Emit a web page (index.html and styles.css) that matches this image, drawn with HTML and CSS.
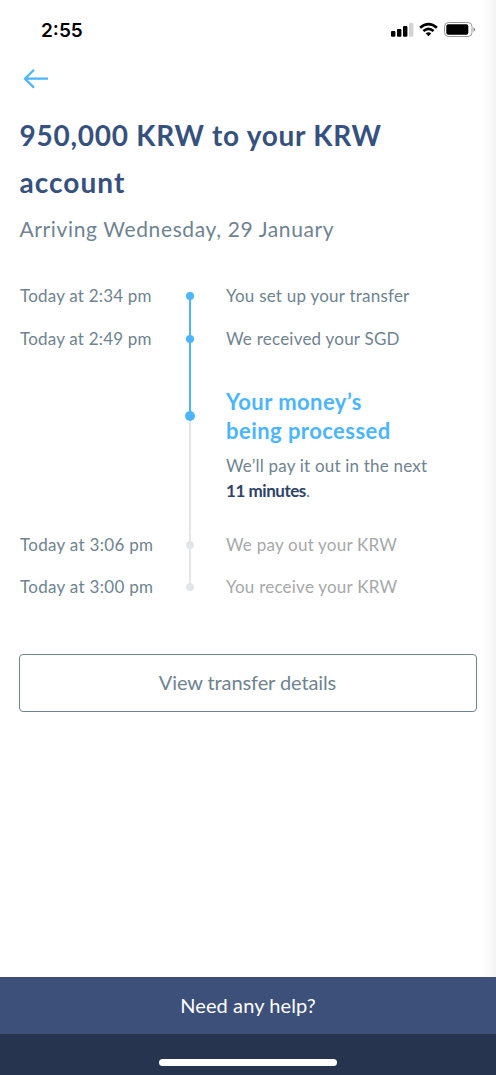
FILE: index.html
```html
<!DOCTYPE html>
<html lang="en">
<head>
<meta charset="utf-8">
<title>Transfer status</title>
<link rel="stylesheet" href="styles.css">
</head>
<body>
<main class="screen">
  <header class="status-bar">
    <span class="clock">2:55</span>
    <svg class="status-icons" width="86" height="20" viewBox="0 0 86 20">
      <rect x="1" y="11" width="4.400" height="5.800" rx="1"/>
      <rect x="7" y="9" width="4.400" height="7.800" rx="1"/>
      <rect x="13" y="6" width="4.400" height="10.800" rx="1"/>
      <rect x="19" y="3" width="4.400" height="13.800" rx="1" fill="#d2d2d2"/>
      <g fill="none" stroke="#000" stroke-width="2.700">
        <path d="M30.100 7.700Q38.500 0.400 46.900 7.700"/>
        <path d="M33.400 11Q38.500 6.700 43.600 11"/>
      </g>
      <path d="M35.700 13.300Q38.500 11.200 41.300 13.300L38.500 16.300Z"/>
      <rect x="54.500" y="2.500" width="27.500" height="14" rx="4" fill="none" stroke="#999"/>
      <rect x="56.300" y="4.300" width="22" height="10.400" rx="2"/>
      <path d="M83.500 7.200Q87 9.500 83.500 11.800Z" fill="#888"/>
    </svg>
  </header>
  <nav class="nav">
    <svg width="26" height="20" viewBox="0 0 26 20" fill="none" stroke="#4db5ff" stroke-width="2.200">
      <path d="M25 9.700H2M11 0.800L2 9.700L11 18.600"/>
    </svg>
  </nav>
  <h1 class="title">950,000 KRW to your KRW<br><span class="title-end">account</span></h1>
  <p class="arrival">Arriving Wednesday, 29 January</p>
  <section class="timeline">
    <div class="step">
      <time>Today at 2:34 pm</time><i class="rail"></i><p>You set up your transfer</p>
    </div>
    <div class="step">
      <time>Today at 2:49 pm</time><i class="rail"></i><p>We received your SGD</p>
    </div>
    <div class="step current">
      <time></time><i class="rail"></i>
      <div class="progress">
        <h2>Your money’s<br>being processed</h2>
        <p>We’ll pay it out in the next<br><b>11 minutes</b>.</p>
      </div>
    </div>
    <div class="step todo">
      <time>Today at 3:06 pm</time><i class="rail"></i><p>We pay out your KRW</p>
    </div>
    <div class="step todo last">
      <time>Today at 3:00 pm</time><i class="rail"></i><p>You receive your KRW</p>
    </div>
  </section>
  <button class="details">View transfer details</button>
  <footer class="footer">
    <div class="help">Need any help?</div>
    <div class="home-area"><i class="home-bar"></i></div>
  </footer>
</main>
</body>
</html>
```
FILE: styles.css
```css
* { box-sizing: border-box; }
body { margin: 0; background: #fff; font-family: Lato, "Liberation Sans", sans-serif; color: #6f8390; }
h1, h2, p { margin: 0; }

.screen { display: flex; flex-direction: column; height: 1075px; background: linear-gradient(to left, #f3f3f3, #fafafa 7px, #fff 16px); }

.status-bar { display: flex; justify-content: space-between; align-items: center; height: 60px; padding: 0 20px 0 41px; }
.clock { font: 600 19px Inter, sans-serif; color: #000; }
.nav { display: flex; height: 52px; padding: 9px 23px; }

.title { padding: 0 19.500px; font-size: 28px; line-height: 46.500px; font-weight: 700; letter-spacing: 0.74px; color: #37517e; }
.title-end { letter-spacing: 1.05px; }
.arrival { padding: 8px 19.500px 0; font-size: 21px; line-height: 32px; letter-spacing: 0.63px; }

.timeline { display: flex; flex-direction: column; margin-top: 39px; padding: 0 20px; }
.step { display: grid; grid-template-columns: 159px 22px 1fr; height: 42.600px; font-size: 17px; line-height: 24px; }
.step time { letter-spacing: 0.2px; }
.step > p { padding-left: 25px; letter-spacing: 0.23px; }
.todo time { letter-spacing: 0.3px; }

.rail { display: flex; flex-direction: column; align-items: center; background: linear-gradient(#4db5ff, #4db5ff) center 12px / 2.400px 100% no-repeat; }
.rail::before { content: ""; width: 8px; height: 8px; margin-top: 8px; border-radius: 50%; background: #4db5ff; }
.step:not(:first-child) .rail { background-position: center 0; }

.current { height: 163.400px; }
.step.current .rail { background: linear-gradient(#4db5ff 46px, #e2e6e9 46px) center / 2.400px 100% no-repeat; }
.current .rail::before { width: 10px; height: 10px; margin-top: 41.500px; }
.progress { padding: 18px 0 0 25px; }
.progress h2 { font-size: 22px; line-height: 29px; letter-spacing: 0.45px; color: #4db5ff; }
.progress p { margin-top: 7.500px; line-height: 25px; letter-spacing: 0.2px; white-space: nowrap; }
.progress b { letter-spacing: -0.45px; color: #2e4369; }

.todo p { color: #a6a8aa; }
.step.todo .rail { background: linear-gradient(#e2e6e9, #e2e6e9) center 0 / 2.400px 100% no-repeat; }
.todo .rail::before { background: #e2e6e9; }
.step.last .rail { background-size: 2.400px 12px; }

.details { flex: none; height: 58px; margin: 36px 19px 0; padding: 0 1px 2px 0; border: 1px solid #6f8390; border-radius: 4px; background: transparent; color: inherit; font: 20px Lato, sans-serif; letter-spacing: -0.1px; }

.footer { margin-top: auto; }
.help { display: flex; align-items: center; justify-content: center; height: 57.500px; padding-bottom: 1px; background: #3d5079; color: #fff; font-size: 20px; letter-spacing: 0.1px; }
.home-area { display: flex; justify-content: center; height: 41px; padding-top: 25px; background: #27344f; }
.home-bar { width: 178px; height: 7px; border-radius: 4px; background: #fff; }
```
